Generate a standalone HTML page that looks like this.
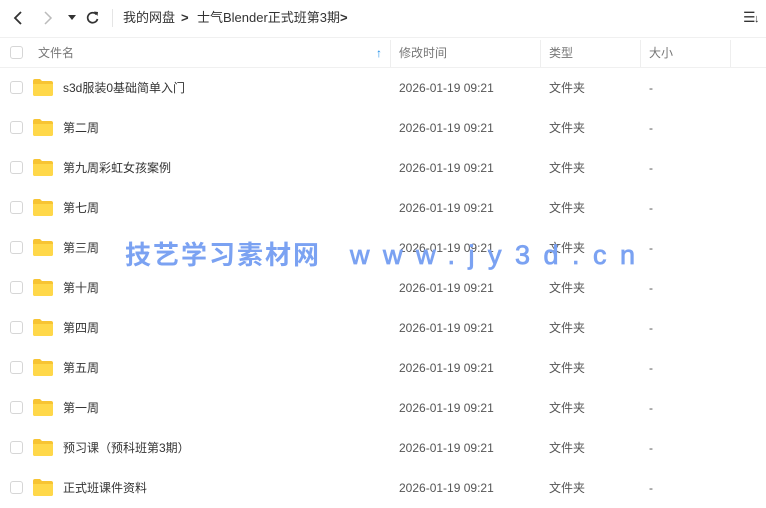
<!DOCTYPE html>
<html><head><meta charset="utf-8"><style>
*{margin:0;padding:0;box-sizing:border-box}
body{width:766px;height:508px;background:#fff;font-family:"Liberation Sans","Noto Sans CJK SC",sans-serif;position:relative;overflow:hidden;color:#333;line-height:16px}
.top{position:absolute;left:0;top:0;width:766px;height:36px;font-size:13px}
.top span{line-height:18px}
.hdr{position:absolute;top:37px;left:0;width:766px;height:31px;border-top:1px solid #f0f0f0;border-bottom:1px solid #f0f0f0;font-size:12px;color:#777}
.hdr span{position:absolute;top:7px}
.sep{position:absolute;top:2px;width:1px;height:27px;background:#eee}
.cb{position:absolute;left:10px;width:13px;height:13px;border:1px solid #d6d6d6;border-radius:3px;background:#fff}
.row{position:absolute;left:0;width:766px;height:40px;font-size:12px}
.row span{position:absolute;top:12px}
.row .n{left:63px;color:#333}
.row .t{left:399px;color:#555}
.row .k{left:549px;color:#555}
.row .s{left:649px;color:#555}
.fold{position:absolute;left:33px;top:11px;width:20px;height:17px}
.wm{position:absolute;top:240px;font-weight:bold;color:#7ba2f2;font-size:26px;white-space:nowrap;line-height:30px}
</style></head><body>
<div class="top">
<svg style="position:absolute;left:12px;top:10px" width="12" height="16"><path d="M9 2 L3 8 L9 14" stroke="#333" stroke-width="1.8" fill="none"/></svg>
<svg style="position:absolute;left:42px;top:10px" width="12" height="16"><path d="M3 2 L9 8 L3 14" stroke="#bbb" stroke-width="1.5" fill="none"/></svg>
<svg style="position:absolute;left:68px;top:15px" width="8" height="6"><path d="M0 0 L8 0 L4 5Z" fill="#333"/></svg>
<svg style="position:absolute;left:85px;top:10px" width="15" height="15"><path d="M11.5 4.5 A5 5 0 1 0 12.5 9" stroke="#333" stroke-width="1.7" fill="none"/><path d="M9 1.5 L13 2 L12.5 6Z" fill="#333"/></svg>
<div style="position:absolute;left:112px;top:9px;width:1px;height:18px;background:#e5e5e5"></div>
<span style="position:absolute;left:123px;top:9px">我的网盘</span>
<span style="position:absolute;left:181px;top:9px;font-weight:bold">&gt;</span>
<span style="position:absolute;left:197px;top:9px">士气Blender正式班第3期</span>
<span style="position:absolute;left:340px;top:9px;font-weight:bold">&gt;</span>
<span style="position:absolute;left:743px;top:8px;font-size:14px">☰</span><span style="position:absolute;left:754px;top:10px;font-size:11px">↓</span>
</div>
<div class="hdr">
<div class="cb" style="top:8px"></div>
<span style="left:38px">文件名</span>
<span style="left:376px;color:#1a8ce8;font-weight:bold">↑</span>
<div class="sep" style="left:390px"></div>
<span style="left:399px">修改时间</span>
<div class="sep" style="left:540px"></div>
<span style="left:549px">类型</span>
<div class="sep" style="left:640px"></div>
<span style="left:649px">大小</span>
<div class="sep" style="left:730px"></div>
</div>
<div class="row" style="top:68px"><div class="cb" style="top:13px"></div><svg class="fold" viewBox="0 0 20 17"><path d="M0 2 Q0 0 2 0 L7 0 L9 2 L18 2 Q20 2 20 4 L20 15 Q20 17 18 17 L2 17 Q0 17 0 15Z" fill="#f7c433"/><path d="M0 5 L20 5 L20 15 Q20 17 18 17 L2 17 Q0 17 0 15Z" fill="#ffd84a"/></svg><span class="n">s3d服装0基础简单入门</span><span class="t">2026-01-19 09:21</span><span class="k">文件夹</span><span class="s">-</span></div>
<div class="row" style="top:108px"><div class="cb" style="top:13px"></div><svg class="fold" viewBox="0 0 20 17"><path d="M0 2 Q0 0 2 0 L7 0 L9 2 L18 2 Q20 2 20 4 L20 15 Q20 17 18 17 L2 17 Q0 17 0 15Z" fill="#f7c433"/><path d="M0 5 L20 5 L20 15 Q20 17 18 17 L2 17 Q0 17 0 15Z" fill="#ffd84a"/></svg><span class="n">第二周</span><span class="t">2026-01-19 09:21</span><span class="k">文件夹</span><span class="s">-</span></div>
<div class="row" style="top:148px"><div class="cb" style="top:13px"></div><svg class="fold" viewBox="0 0 20 17"><path d="M0 2 Q0 0 2 0 L7 0 L9 2 L18 2 Q20 2 20 4 L20 15 Q20 17 18 17 L2 17 Q0 17 0 15Z" fill="#f7c433"/><path d="M0 5 L20 5 L20 15 Q20 17 18 17 L2 17 Q0 17 0 15Z" fill="#ffd84a"/></svg><span class="n">第九周彩虹女孩案例</span><span class="t">2026-01-19 09:21</span><span class="k">文件夹</span><span class="s">-</span></div>
<div class="row" style="top:188px"><div class="cb" style="top:13px"></div><svg class="fold" viewBox="0 0 20 17"><path d="M0 2 Q0 0 2 0 L7 0 L9 2 L18 2 Q20 2 20 4 L20 15 Q20 17 18 17 L2 17 Q0 17 0 15Z" fill="#f7c433"/><path d="M0 5 L20 5 L20 15 Q20 17 18 17 L2 17 Q0 17 0 15Z" fill="#ffd84a"/></svg><span class="n">第七周</span><span class="t">2026-01-19 09:21</span><span class="k">文件夹</span><span class="s">-</span></div>
<div class="row" style="top:228px"><div class="cb" style="top:13px"></div><svg class="fold" viewBox="0 0 20 17"><path d="M0 2 Q0 0 2 0 L7 0 L9 2 L18 2 Q20 2 20 4 L20 15 Q20 17 18 17 L2 17 Q0 17 0 15Z" fill="#f7c433"/><path d="M0 5 L20 5 L20 15 Q20 17 18 17 L2 17 Q0 17 0 15Z" fill="#ffd84a"/></svg><span class="n">第三周</span><span class="t">2026-01-19 09:21</span><span class="k">文件夹</span><span class="s">-</span></div>
<div class="row" style="top:268px"><div class="cb" style="top:13px"></div><svg class="fold" viewBox="0 0 20 17"><path d="M0 2 Q0 0 2 0 L7 0 L9 2 L18 2 Q20 2 20 4 L20 15 Q20 17 18 17 L2 17 Q0 17 0 15Z" fill="#f7c433"/><path d="M0 5 L20 5 L20 15 Q20 17 18 17 L2 17 Q0 17 0 15Z" fill="#ffd84a"/></svg><span class="n">第十周</span><span class="t">2026-01-19 09:21</span><span class="k">文件夹</span><span class="s">-</span></div>
<div class="row" style="top:308px"><div class="cb" style="top:13px"></div><svg class="fold" viewBox="0 0 20 17"><path d="M0 2 Q0 0 2 0 L7 0 L9 2 L18 2 Q20 2 20 4 L20 15 Q20 17 18 17 L2 17 Q0 17 0 15Z" fill="#f7c433"/><path d="M0 5 L20 5 L20 15 Q20 17 18 17 L2 17 Q0 17 0 15Z" fill="#ffd84a"/></svg><span class="n">第四周</span><span class="t">2026-01-19 09:21</span><span class="k">文件夹</span><span class="s">-</span></div>
<div class="row" style="top:348px"><div class="cb" style="top:13px"></div><svg class="fold" viewBox="0 0 20 17"><path d="M0 2 Q0 0 2 0 L7 0 L9 2 L18 2 Q20 2 20 4 L20 15 Q20 17 18 17 L2 17 Q0 17 0 15Z" fill="#f7c433"/><path d="M0 5 L20 5 L20 15 Q20 17 18 17 L2 17 Q0 17 0 15Z" fill="#ffd84a"/></svg><span class="n">第五周</span><span class="t">2026-01-19 09:21</span><span class="k">文件夹</span><span class="s">-</span></div>
<div class="row" style="top:388px"><div class="cb" style="top:13px"></div><svg class="fold" viewBox="0 0 20 17"><path d="M0 2 Q0 0 2 0 L7 0 L9 2 L18 2 Q20 2 20 4 L20 15 Q20 17 18 17 L2 17 Q0 17 0 15Z" fill="#f7c433"/><path d="M0 5 L20 5 L20 15 Q20 17 18 17 L2 17 Q0 17 0 15Z" fill="#ffd84a"/></svg><span class="n">第一周</span><span class="t">2026-01-19 09:21</span><span class="k">文件夹</span><span class="s">-</span></div>
<div class="row" style="top:428px"><div class="cb" style="top:13px"></div><svg class="fold" viewBox="0 0 20 17"><path d="M0 2 Q0 0 2 0 L7 0 L9 2 L18 2 Q20 2 20 4 L20 15 Q20 17 18 17 L2 17 Q0 17 0 15Z" fill="#f7c433"/><path d="M0 5 L20 5 L20 15 Q20 17 18 17 L2 17 Q0 17 0 15Z" fill="#ffd84a"/></svg><span class="n">预习课（预科班第3期）</span><span class="t">2026-01-19 09:21</span><span class="k">文件夹</span><span class="s">-</span></div>
<div class="row" style="top:468px"><div class="cb" style="top:13px"></div><svg class="fold" viewBox="0 0 20 17"><path d="M0 2 Q0 0 2 0 L7 0 L9 2 L18 2 Q20 2 20 4 L20 15 Q20 17 18 17 L2 17 Q0 17 0 15Z" fill="#f7c433"/><path d="M0 5 L20 5 L20 15 Q20 17 18 17 L2 17 Q0 17 0 15Z" fill="#ffd84a"/></svg><span class="n">正式班课件资料</span><span class="t">2026-01-19 09:21</span><span class="k">文件夹</span><span class="s">-</span></div>
<div class="wm" style="left:125px;letter-spacing:2px">技艺学习素材网</div>
<div class="wm" style="left:350px;font-size:27px;letter-spacing:13.5px;font-weight:normal;-webkit-text-stroke:0.8px #7ba2f2">www.jy3d.cn</div>
</body></html>
